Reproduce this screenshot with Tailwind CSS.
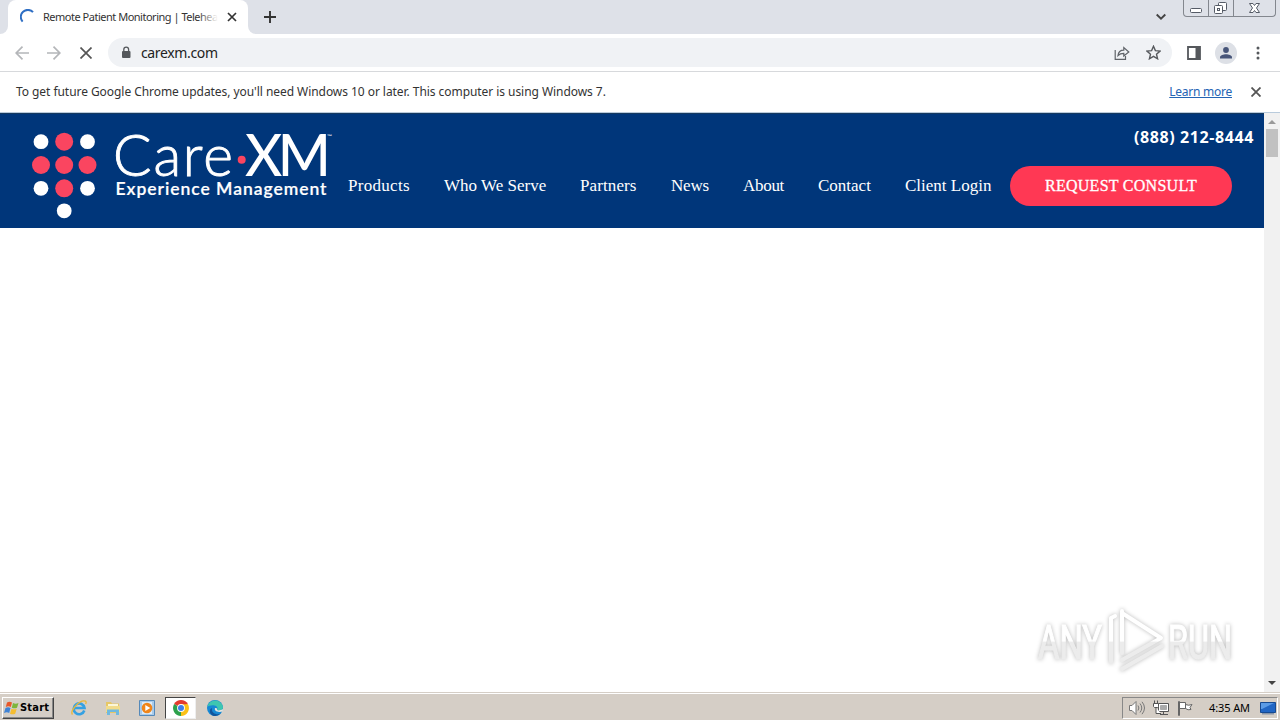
<!DOCTYPE html>
<html lang="en">
<head>
    <meta charset="UTF-8">
    <meta name="viewport" content="width=device-width, initial-scale=1.0">
    <title>Remote Patient Monitoring | Telehealth</title>
    <script src="https://cdn.jsdelivr.net/npm/@tailwindcss/browser@4"></script>
</head>
<body class="h-screen overflow-hidden flex flex-col bg-white font-['Noto_Sans',sans-serif] text-[#333]">
    <!-- Tab strip -->
    <div class="h-[34px] shrink-0 flex bg-[#dee1e8]">
        <div class="w-2 bg-white"><div class="h-full bg-[#dee1e8] rounded-br-lg"></div></div>
        <div class="w-[240px] bg-[#dee1e8]">
            <div class="h-full bg-white rounded-t-lg flex items-center pl-3">
                <svg class="w-4 h-4 shrink-0" viewBox="0 0 16 16" fill="none" stroke="#2f6fc4" stroke-width="2"><path d="M2.6 12.6A6.5 6.5 0 0 1 13 3.2"/></svg>
                <div class="relative ml-[7px] w-[175px] overflow-hidden whitespace-nowrap text-[11px] leading-4 tracking-[-0.49px]">Remote Patient Monitoring | Telehea
                    <div class="absolute right-0 top-0 h-4 w-5 bg-linear-to-r from-white/0 to-white"></div>
                </div>
                <svg class="ml-[9px] w-[10px] h-[10px] shrink-0" viewBox="0 0 10 10" stroke="#333" stroke-width="1.7"><path d="M1 1l8 8M9 1L1 9"/></svg>
            </div>
        </div>
        <div class="w-2 bg-white"><div class="h-full bg-[#dee1e8] rounded-bl-lg"></div></div>
        <svg class="ml-2 mt-[11px] w-3 h-3" viewBox="0 0 12 12" stroke="#333" stroke-width="1.9"><path d="M6 0v12M0 6h12"/></svg>
        <div class="flex-1"></div>
        <svg class="mt-3 mr-[17px] w-[10px] h-[10px]" viewBox="0 0 10 10" fill="none" stroke="#444" stroke-width="1.9"><path d="M.7 2.5L5 6.7l4.300-4.200"/></svg>
        <!-- Window buttons -->
        <div class="w-[93px] h-[17px] mr-1 flex border border-t-0 border-[#83878e] rounded-b-[4px]">
            <svg class="w-[91px] h-4" viewBox="0 0 91 16" fill="#fff" stroke="#555b66">
                <path d="M24.500 0v16M49.500 0v16" stroke="#83878e"/>
                <rect x="6.500" y="8.500" width="11" height="4" rx="1"/>
                <rect x="34.500" y="2.500" width="8" height="8" rx="1"/>
                <rect x="30.500" y="5.500" width="8" height="8" rx="1"/>
                <rect x="33.500" y="8.500" width="2" height="2"/>
                <path d="M65.500 3.500h3.500l1.500 2 1.500-2h3.500L72.500 8l3 4.500H72l-1.500-2-1.500 2h-3.500l3-4.500z"/>
            </svg>
        </div>
    </div>

    <!-- Toolbar -->
    <div class="h-[38px] shrink-0 flex items-center border-b border-[#d7d9dc] pl-[15px]">
        <svg class="w-[14px] h-[14px]" viewBox="0 0 14 14" fill="none" stroke="#b4b6b9" stroke-width="1.700"><path d="M14 7H1M7.500.7L1.200 7l6.300 6.300"/></svg>
        <svg class="ml-[18px] w-[14px] h-[14px]" viewBox="0 0 14 14" fill="none" stroke="#b4b6b9" stroke-width="1.700"><path d="M0 7h13M6.500.7L12.800 7l-6.300 6.300"/></svg>
        <svg class="ml-[19px] w-3 h-3" viewBox="0 0 12 12" stroke="#555" stroke-width="1.700"><path d="M.5.5l11 11M11.500.5l-11 11"/></svg>
        <div class="ml-4 w-[1064px] h-[29px] rounded-full bg-[#f0f2f5] flex items-center pl-[13px] pr-[11px]">
            <svg class="w-[10px] h-[13px] mb-px" viewBox="0 0 10 13"><rect x="1" y="5" width="8.500" height="7" rx="1" fill="#55585c"/><path d="M2.800 5V3.500a2.400 2.400 0 0 1 4.800 0V5" fill="none" stroke="#55585c" stroke-width="1.300"/></svg>
            <span class="ml-[10px] text-[14px] leading-5 tracking-[-0.35px] text-[#222]">carexm.com</span>
            <div class="flex-1"></div>
            <svg class="w-4 h-[14px]" viewBox="0 0 16 14" fill="none" stroke="#5f6368" stroke-width="1.200"><path d="M1.200 4v9.300h10.300V10M4 9.500c.4-3.600 2.300-5.300 5.800-5.300V1.500L14.800 6 9.800 10V7.300C7 7.300 5.400 8 4 9.500z"/></svg>
            <svg class="ml-4 w-[15px] h-[15px]" viewBox="0 0 24 24" fill="none" stroke="#55585c" stroke-width="2.200"><path d="M12 2l3 7 7.500.7-5.700 5 1.700 7.300L12 18.100 5.500 22l1.700-7.300-5.700-5L9 9z"/></svg>
        </div>
        <svg class="ml-[15px] w-[14px] h-[14px]" viewBox="0 0 14 14"><path d="M1 1h12v12H1z" fill="none" stroke="#55585c" stroke-width="1.800"/><path d="M8.500 1H13v12H8.500z" fill="#55585c"/></svg>
        <svg class="ml-[14px] w-[22px] h-[22px]" viewBox="0 0 22 22"><circle cx="11" cy="11" r="11" fill="#dde0e6"/><circle cx="11" cy="8" r="2.900" fill="#475579"/><path d="M5 16.500v-1.300c0-2 3.500-3 6-3s6 1 6 3v1.300z" fill="#475579"/></svg>
        <svg class="ml-[19px] w-1 h-[14px]" viewBox="0 0 4 14" fill="#55585c"><circle cx="2" cy="2" r="1.500"/><circle cx="2" cy="7" r="1.500"/><circle cx="2" cy="12" r="1.500"/></svg>
    </div>

    <!-- Update notice -->
    <div class="h-[40px] shrink-0 flex items-center pl-4 pr-[19px] text-[12px] whitespace-nowrap">
        <span class="tracking-[-0.055px]">To get future Google Chrome updates, you'll need Windows 10 or later. This computer is using Windows 7.</span>
        <div class="flex-1"></div>
        <a href="#" class="text-[#2464b4] underline tracking-[-0.25px]">Learn more</a>
        <svg class="ml-[19px] w-[10px] h-[10px]" viewBox="0 0 10 10" stroke="#555" stroke-width="1.800"><path d="M.5.5l9 9M9.500.5l-9 9"/></svg>
    </div>

    <!-- Web page -->
    <div class="flex-1 min-h-0 flex border-t border-[#b9cbdc]">
        <div class="flex-1 relative">
            <header class="h-[115px] flex bg-[#00367a] border-t border-[#15395f] text-white">
                <svg class="w-[348px] h-[114px] shrink-0" viewBox="0 1 348 114" font-family="Lato, sans-serif">
                    <g fill="#fff">
                        <circle cx="41" cy="28.700" r="7.400"/><circle cx="87.500" cy="28.700" r="7.400"/>
                        <circle cx="41" cy="75.300" r="7.400"/><circle cx="87.500" cy="75.300" r="7.400"/>
                        <circle cx="64.200" cy="97.800" r="7.400"/>
                    </g>
                    <g fill="#fa4560">
                        <circle cx="64.200" cy="28.700" r="9"/><circle cx="64.200" cy="52" r="9"/>
                        <circle cx="41" cy="52" r="9"/><circle cx="87.500" cy="52" r="9"/>
                        <circle cx="64.200" cy="75.300" r="9"/><circle cx="241.700" cy="46.700" r="4"/>
                    </g>
                    <g fill="#fff">
                        <text x="113" y="63" font-size="57" font-weight="300" textLength="120" stroke="#fff" stroke-width=".9">Care</text>
                        <text x="245" y="63" font-size="57" font-weight="500" textLength="86">XM</text>
                        <text x="327" y="25" font-size="5" textLength="5" lengthAdjust="spacingAndGlyphs">™</text>
                        <text x="115.500" y="81.500" font-size="17.500" font-weight="600" textLength="211" stroke="#fff" stroke-width=".2">Experience Management</text>
                    </g>
                </svg>
                <div class="flex-1 flex flex-col">
                    <div class="h-[52px] pr-[10px] pt-[11px] text-right text-[16px] leading-6 tracking-[0.6px] font-bold font-['Open_Sans',sans-serif]">(888) 212-8444</div>
                    <nav class="h-10 flex items-center whitespace-nowrap text-[17px] font-['Liberation_Serif',serif]">
                        <a class="w-[96px] tracking-[0.3px]">Products</a>
                        <a class="w-[136px]">Who We Serve</a>
                        <a class="w-[91px] tracking-[0.1px]">Partners</a>
                        <a class="w-[72px] tracking-[-0.2px]">News</a>
                        <a class="w-[75px] tracking-[-0.3px]">About</a>
                        <a class="w-[87px]">Contact</a>
                        <a class="w-[105px]">Client Login</a>
                        <a class="w-[222px] h-10 rounded-full bg-[#ff3854] flex items-center justify-center text-[16px] tracking-[0.27px] [-webkit-text-stroke:0.3px_white]">REQUEST CONSULT</a>
                    </nav>
                </div>
            </header>
            <!-- Watermark -->
            <svg class="absolute right-[22px] bottom-[14px] w-[212px] h-[76px] drop-shadow-[0_0_2px_rgba(0,0,0,0.28)]" viewBox="1030 602 212 76" fill="none" font-family="Roboto, sans-serif">
                <defs>
                    <linearGradient id="fade" gradientUnits="userSpaceOnUse" x1="0" y1="620" x2="0" y2="668">
                        <stop offset=".44" stop-color="#fff"/><stop offset=".46" stop-color="#ececec"/>
                    </linearGradient>
                </defs>
                <g fill="url(#fade)" stroke="url(#fade)" stroke-width="1.200" font-size="49">
                    <text x="1038" y="659" textLength="64" lengthAdjust="spacingAndGlyphs">ANY</text>
                    <text x="1168" y="659" textLength="64" lengthAdjust="spacingAndGlyphs">RUN</text>
                </g>
                <g stroke="url(#fade)" stroke-width="4" stroke-linejoin="round" stroke-linecap="round">
                    <path d="M1122 653V613l39 25-39 22M1122 669l40-23"/>
                    <path d="M1111 662V618l4-2M1122 612v-1"/>
                </g>
            </svg>
        </div>
        <!-- Scrollbar -->
        <div class="w-4 bg-[#f1f1f1] flex flex-col items-center justify-between">
            <div class="flex flex-col items-center">
                <svg class="w-4 h-4" viewBox="0 0 16 16" fill="#999"><path d="M4 11h8L8 7z"/></svg>
                <div class="w-3 h-7 bg-[#c1c1c1]"></div>
            </div>
            <svg class="w-4 h-4" viewBox="0 0 16 16" fill="#444"><path d="M4 5h8l-4 4z"/></svg>
        </div>
    </div>

    <!-- Taskbar -->
    <div class="h-[28px] shrink-0 flex items-center bg-[#d5cec6] border-t border-[#d5cec6] shadow-[inset_0_1px_0_#fff] text-black pt-[2px]">
        <div class="ml-[2px] w-[52px] h-[22px] flex items-center border border-t-white border-l-white border-r-[#444] border-b-[#444] shadow-[inset_-1px_-1px_0_#888]">
            <svg class="ml-px w-4 h-4 shrink-0" viewBox="0 0 16 16">
                <path d="M3 2.500q2.500-1.500 5 0L6.800 7Q4.500 5.700 1.800 7z" fill="#e8582a"/>
                <path d="M9 3q2.500 1.300 5.500 0L13 7.700q-2.500 1.200-5.200 0z" fill="#7db53b"/>
                <path d="M1.500 8q2.500-1.300 5 0l-1.300 5Q3 11.700 0 13z" fill="#3f83d6"/>
                <path d="M7.500 8.700q2.500 1.200 5.200 0l-1.500 5q-2.500 1.200-5.200 0z" fill="#f5bd30"/>
            </svg>
            <span class="text-[11px] font-bold leading-4 tracking-[0.2px] font-['DejaVu_Sans_Condensed','DejaVu_Sans',sans-serif]">Start</span>
        </div>
        <!-- Internet Explorer -->
        <svg class="ml-[17px] w-4 h-4" viewBox="0 0 16 16" fill="none">
            <path d="M13.300 10.500A5.400 5.400 0 1 1 13.500 8H4" stroke="#35a1e2" stroke-width="2.600"/>
            <path d="M1.500 14.500C-1.500 11 9-1 14.500 1.200c1 .5.600 2 .1 2.800" stroke="#e9b738" stroke-width="1.300"/>
        </svg>
        <!-- Explorer -->
        <svg class="ml-[18px] w-4 h-4" viewBox="0 0 16 16">
            <path d="M1 2h5l1 1.500h7V13H1z" fill="#e6c766"/><path d="M3 4h10v6H3z" fill="#fbf6d8"/><path d="M1 6h14v6H1z" fill="#f2dc8b"/>
            <path d="M2 15V9.500h12V15h-3v-3H5v3z" fill="#70b9df"/>
        </svg>
        <!-- Media player -->
        <svg class="ml-[18px] w-4 h-4" viewBox="0 0 16 16">
            <path d="M.5.500h15v15H.5z" fill="#a9cbea" stroke="#5589b9"/><path d="M3 2h10v12H3z" fill="#dcebf7"/>
            <circle cx="8" cy="8" r="5.300" fill="#f08519"/><path d="M6.300 5v6l5-3z" fill="#fff"/>
        </svg>
        <!-- Chrome -->
        <div class="ml-[10px] w-[31px] h-[22px] flex items-center justify-center bg-white border border-t-[#444] border-l-[#444] border-r-[#eee] border-b-[#eee]">
            <svg class="w-4 h-4" viewBox="0 0 16 16">
                <path d="M8 8L1.100 4A8 8 0 0 1 14.900 4z" fill="#e33b2e"/>
                <path d="M8 8L14.900 4A8 8 0 0 1 8 16z" fill="#fbc116"/>
                <path d="M8 8v8A8 8 0 0 1 1.100 4z" fill="#2da14c"/>
                <path d="M8 4.300h7L11.300 10 8 16z" fill="#fbc116"/>
                <circle cx="8" cy="8" r="3.900" fill="#fff"/><circle cx="8" cy="8" r="3" fill="#3f7ee8"/>
            </svg>
        </div>
        <!-- Edge -->
        <svg class="ml-[11px] w-4 h-4" viewBox="0 0 16 16">
            <circle cx="8" cy="8" r="8" fill="#1688d4"/>
            <path d="M.2 7A8 8 0 0 1 16 7.500c0 3-4 4-6 2.500 1-1 .8-4-2.500-4.500C4 5 1 6 .2 7z" fill="#3ec6b0"/>
            <path d="M5 8c-1 4 3 7.500 8.500 5.800A8 8 0 0 1 6 15.700C2 14 2 9 5 8z" fill="#12549b"/>
            <path d="M8 8c-1 2.500 2 5 7.800 3.500L16 9c-3 1.700-5 1.700-6 .8.600-1 0-2-2-1.800z" fill="#e5e5e0"/>
        </svg>
        <div class="flex-1"></div>
        <!-- Tray -->
        <div class="mr-[2px] w-[156px] h-[22px] flex items-center border border-t-[#888] border-l-[#888] border-r-white border-b-white pl-[6px]">
            <svg class="w-4 h-4" viewBox="0 0 16 16" fill="#fff" stroke="#777"><path d="M.5 5.500H3l4-4v13l-4-4H.5z"/><path d="M9 5.500q1.800 2.500 0 5M11 3.500q3.500 4.500 0 9M13 1.800q5 6.200 0 12.400" fill="none"/></svg>
            <svg class="ml-2 w-4 h-4" viewBox="0 0 16 16" fill="#fff" stroke="#555"><path d="M5.500 3.500h10v8h-10z"/><path d="M7.500 5.500h6v4h-6z" fill="#aaa" stroke="#aaa"/><path d="M.500 3.500h5v3l-1 1h-3l-1-1zM1.500 3.500v-3M4.500 3.500v-3M3 7.500v6h5M7 14.500h8M10.500 11.500v3"/></svg>
            <svg class="ml-2 w-4 h-4" viewBox="0 0 16 16" fill="#fff" stroke="#666"><path d="M1.500 1.500v14h1v-14zM2.500 2.500h6v6h-6zM8.500 4.500q3 1.500 6.500 0l-2 3 1 2q-3 1-5.500-1z"/></svg>
            <span class="ml-4 w-[42px] whitespace-nowrap text-[11px] leading-4 tracking-[-0.1px]">4:35 AM</span>
            <svg class="ml-[9px] w-4 h-[14px]" viewBox="0 0 16 14"><path d="M.5 1.500h15v10H.5z" fill="#2166c4" stroke="#174a91"/><path d="M1 2h13L2 8H1z" fill="#5b9be6"/><path d="M2 12h12v1.500H2z" fill="#8795a8"/></svg>
        </div>
    </div>
</body>
</html>
